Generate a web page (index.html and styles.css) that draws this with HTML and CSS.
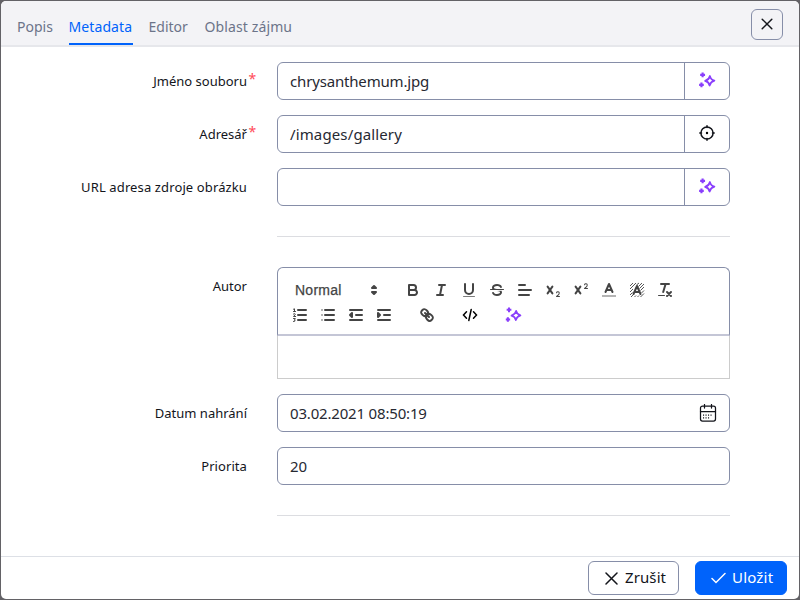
FILE: index.html
```html
<!DOCTYPE html>
<html lang="cs">
<head>
<meta charset="utf-8">
<title>Metadata</title>
<link rel="stylesheet" href="styles.css">
</head>
<body>
<svg class="defs" aria-hidden="true">
  <symbol id="sparkle" viewBox="0 0 16 16">
    <path d="M10.300 3.800Q10.900 7.100 14.500 8.100Q10.900 9.200 10 12.700Q9.300 9.300 5.800 8.400Q9.500 7.200 10.300 3.800Z" fill="none" stroke="currentColor" stroke-width="1.700" stroke-linejoin="round"/>
    <path d="M3.400 .4V5M1.100 2.700H5.700M2.300 9.900V14.300M.1 12.100H4.500" fill="none" stroke="currentColor" stroke-width="2"/>
  </symbol>
</svg>
<div class="modal">
  <header class="header">
    <nav class="tabs">
      <a class="tab t1">Popis</a>
      <a class="tab t2 active">Metadata</a>
      <a class="tab t3">Editor</a>
      <a class="tab t4">Oblast zájmu</a>
    </nav>
    <button class="close"><svg width="12" height="12" viewBox="0 0 12 12"><path class="line" d="M1.200 1.200 10.800 10.800M10.800 1.200 1.200 10.800"/></svg></button>
  </header>
  <main class="form">
    <div class="row">
      <label class="l1">Jméno souboru<sup>*</sup></label>
      <div class="field"><span class="value v1">chrysanthemum.jpg</span><span class="addon ai"><svg width="17" height="17"><use href="#sparkle"/></svg></span></div>
    </div>
    <div class="row">
      <label class="l2">Adresář<sup>*</sup></label>
      <div class="field"><span class="value v2">/images/gallery</span><span class="addon"><svg width="16" height="16" viewBox="0 0 16 16"><circle class="line" cx="8" cy="8" r="6.100"/><path class="line" d="M8 .8V2.500M8 13.500V15.200M.8 8H2.500M13.500 8H15.200"/><circle cx="8" cy="8" r="1.200"/></svg></span></div>
    </div>
    <div class="row">
      <label class="l3">URL adresa zdroje obrázku</label>
      <div class="field"><span class="value"></span><span class="addon ai"><svg width="17" height="17"><use href="#sparkle"/></svg></span></div>
    </div>
    <hr class="first">
    <div class="row">
      <label class="l4">Autor</label>
      <div class="editor">
        <div class="toolbar">
          <div class="tools">
            <span class="picker">Normal<svg viewBox="0 0 18 18"><polygon class="f s" points="7 11 9 13 11 11 7 11"/><polygon class="f s" points="7 7 9 5 11 7 7 7"/></svg></span>
            <svg viewBox="0 0 18 18"><path class="s" d="M5,4H9.500A2.500,2.500,0,0,1,12,6.500v0A2.500,2.500,0,0,1,9.500,9H5A0,0,0,0,1,5,9V4A0,0,0,0,1,5,4Z"/><path class="s" d="M5,9h5.500A2.500,2.500,0,0,1,13,11.500v0A2.500,2.500,0,0,1,10.500,14H5a0,0,0,0,1,0,0V9A0,0,0,0,1,5,9Z"/></svg>
            <svg viewBox="0 0 18 18"><path class="s" d="M7 4H13M5 14H11M8 14 10 4"/></svg>
            <svg viewBox="0 0 18 18"><path class="s" d="M5,3V9a4.012,4.012,0,0,0,4,4H9a4.012,4.012,0,0,0,4-4V3"/><rect class="f" height="1" rx=".5" width="12" x="3" y="15" opacity=".7"/></svg>
            <svg viewBox="0 0 18 18"><path class="s thin" d="M15.500 8.500H2.500"/><path class="f" d="M9.007,8C6.542,7.791,6,7.519,6,6.500,6,5.792,7.283,5,9,5c1.571,0,2.765.679,2.969,1.309a1,1,0,0,0,1.900-.617C13.356,4.106,11.354,3,9,3,6.200,3,4,4.538,4,6.500a3.200,3.200,0,0,0,.5,1.843Z"/><path class="f" d="M8.984,10C11.457,10.208,12,10.479,12,11.500c0,0.708-1.283,1.500-3,1.500-1.571,0-2.765-.679-2.969-1.309a1,1,0,1,0-1.900.617C4.644,13.894,6.646,15,9,15c2.800,0,5-1.538,5-3.500a3.200,3.200,0,0,0-.5-1.843Z"/></svg>
            <svg viewBox="0 0 18 18"><path class="s" d="M3 9H15M3 14H13M3 4H9"/></svg>
            <svg viewBox="0 0 18 18"><path class="f" d="M15.500,15H13.861a3.858,3.858,0,0,0,1.914-2.975,1.800,1.800,0,0,0-1.600-1.751A1.921,1.921,0,0,0,12.021,11.700a.5.500,0,1,0,.957.291h0a.914.914,0,0,1,1.053-.725.810.810,0,0,1,.744.762c0,1.076-1.169,1.870-1.936,2.400A1.456,1.456,0,0,0,12,15.500a.5.500,0,0,0,.5.500h3A.5.500,0,0,0,15.500,15Z"/><path class="s" d="M3.600 5.600 8.400 12.400M8.400 5.600 3.600 12.400"/></svg>
            <svg viewBox="0 0 18 18"><path class="f" d="M15.500,7H13.861a4.015,4.015,0,0,0,1.914-2.975,1.800,1.800,0,0,0-1.600-1.751A1.922,1.922,0,0,0,12.021,3.700a.5.500,0,1,0,.957.291.917.917,0,0,1,1.053-.725.810.810,0,0,1,.744.762c0,1.077-1.164,1.925-1.934,2.486A1.423,1.423,0,0,0,12,7.500a.5.500,0,0,0,.5.500h3A.5.500,0,0,0,15.500,7Z"/><path class="s" d="M3.600 5.600 8.400 12.400M8.400 5.600 3.600 12.400"/></svg>
            <svg viewBox="0 0 18 18"><path class="s bar" d="M2 15H16" opacity=".4"/><path class="s" d="M5.500 11 9 3 12.500 11M11.630 9H6.380"/></svg>
            <svg viewBox="0 0 18 18"><path class="hatch" d="M2 5 5 2M2 8 6.500 3.500M2 11 5 8M2 14 4.500 11.500M3 16 5 14M6.500 16 8 14.500M9.500 16 11 14.500M12.500 16 16 12.500M13.500 12 16 9.500M12.500 9.500 16 6M11.500 7.500 16 3M10.500 5.500 14 2M8.500 4 11 2M6 4 8 2"/><path class="s" d="M5.500 13 9 5 12.500 13M11.630 11H6.380"/></svg>
            <svg viewBox="0 0 18 18"><path class="s" d="M5 3H13M9.600 3 7.200 11M11 11 15 15M15 11 11 15"/><rect class="f" height="1" rx=".5" width="7" x="2" y="14"/></svg>
          </div>
          <div class="tools second">
            <svg viewBox="0 0 18 18"><path class="s" d="M7 4H15M7 9H15M7 14H15"/><path class="s thin" d="M2.500 5.500H4.500M3.500 5.500V2.800L2.500 3.200M2.500 8Q4.500 7 4.300 8.500L2.500 10.500H4.700M2.500 12.500H4.300L3.500 14Q5.500 15.200 2.500 15.500"/></svg>
            <svg viewBox="0 0 18 18"><path class="s" d="M6 4H15M6 9H15M6 14H15"/><path class="s dot" d="M3 4H3M3 9H3M3 14H3"/></svg>
            <svg viewBox="0 0 18 18"><path class="s" d="M3 14H15M3 4H15M9 9H15"/><path class="f s" d="M5 7V11L3 9Z"/></svg>
            <svg viewBox="0 0 18 18"><path class="s" d="M3 14H15M3 4H15M9 9H15"/><path class="f s" d="M3 7V11L5 9Z"/></svg>
            <svg class="gap" viewBox="0 0 18 18"><path class="s" d="M7 7 11 11M8.900 4.577a3.476,3.476,0,0,1,.36,4.679A3.476,3.476,0,0,1,4.577,8.900C3.185,7.500,2.035,6.400,4.217,4.217S7.500,3.185,8.900,4.577Z"/><path class="s" d="M13.423,9.100a3.476,3.476,0,0,0-4.679-.36,3.476,3.476,0,0,0,.36,4.679c1.392,1.392,2.500,2.542,4.679.36S14.815,10.500,13.423,9.100Z"/></svg>
            <svg class="gap code" viewBox="0 0 18 18"><path class="line" d="M5.500 5.800 2.500 9 5.500 12.200M12.500 5.800 15.500 9 12.500 12.200M10.200 3.500 7.800 14.500"/></svg>
            <svg class="gap sp" viewBox="0 0 18 18"><use href="#sparkle" x="1.500" y="1" width="16.500" height="16.500"/></svg>
          </div>
        </div>
        <div class="content"></div>
      </div>
    </div>
    <div class="row">
      <label class="l5">Datum nahrání</label>
      <div class="field"><span class="value v3">03.02.2021 08:50:19</span><svg class="cal" width="18" height="18" viewBox="0 0 18 18"><rect class="line" x="1.500" y="2" width="15" height="15" rx="2"/><path class="line" d="M1.500 7.500H16.500M5.500 .5V4M12.500 .5V4"/><path class="dots" d="M4 11.100H14M4 13.900H11.500"/></svg></div>
    </div>
    <div class="row">
      <label class="l6">Priorita</label>
      <div class="field"><span class="value v4">20</span></div>
    </div>
    <hr>
  </main>
  <footer class="footer">
    <button class="btn cancel"><svg width="13" height="13" viewBox="0 0 13 13"><path class="line" d="M1 1 12 12M12 1 1 12"/></svg><span>Zrušit</span></button>
    <button class="btn save"><svg width="15" height="12" viewBox="0 0 15 12"><path class="line" d="M1 6.500 5 10.500 14 1.500"/></svg><span>Uložit</span></button>
  </footer>
</div>
</body>
</html>
```
FILE: styles.css
```css
* { box-sizing: border-box; }
body { margin: 0; background: #636266; font-family: "Noto Sans", sans-serif; color: #13151b; }
.defs { position: absolute; width: 0; height: 0; }
.modal { width: 798px; height: 598px; margin: 1px; background: #fff; border-radius: 5px; overflow: hidden; display: flex; flex-direction: column; }
.header { height: 46px; flex: none; background: #f3f3f6; border-bottom: 2px solid #e6e7eb; display: flex; justify-content: space-between; align-items: flex-start; padding: 0 16px; }
.tabs { display: flex; gap: 16px; height: 44px; }
.tab { height: 44px; padding-top: 16px; line-height: 20px; font-size: 14px; color: #6c7489; white-space: nowrap; }
.t1 { width: 35.5px; } .t2 { width: 64px; } .t3 { width: 40px; } .t4 { letter-spacing: .12px; }
.active { color: #0063fb; border-bottom: 2px solid #0063fb; letter-spacing: .1px; }
button { font: inherit; padding: 0; }
.close { width: 32px; height: 31px; margin-top: 8px; border: 1px solid #868ea8; border-radius: 6px; background: transparent; color: #13151b; display: flex; align-items: center; justify-content: center; padding-bottom: 1px; }
.line { fill: none; stroke: currentColor; stroke-width: 1.5; stroke-linecap: round; }
.form { flex: 1; padding-top: 15px; }
.row { display: flex; margin-bottom: 15px; }
label { width: 246px; margin-right: 30px; padding-top: 9px; line-height: 20px; font-size: 13px; text-align: right; white-space: nowrap; position: relative; }
.l6 { letter-spacing: .08px; }
.l3 { letter-spacing: .12px; }
sup { position: absolute; left: 247.500px; top: 7px; font-size: 14px; line-height: 20px; color: #ff4b58; }
.field { width: 453px; height: 38px; border: 1px solid #868ea8; border-radius: 6px; display: flex; align-items: center; }
.value { flex: 1; padding-left: 12px; font-size: 15px; line-height: 22px; color: #272932; white-space: nowrap; }
.v1 { letter-spacing: -.17px; }
.v2 { letter-spacing: .13px; }
.v3 { letter-spacing: -.18px; }
.addon { width: 45px; height: 36px; border-left: 1px solid #868ea8; display: flex; align-items: center; justify-content: center; padding-bottom: 2px; }
.ai { padding: 0 0 1px 1px; }
.ai, .sp { color: #8a3ffc; }
hr { width: 453px; height: 1px; margin: 30px 0 0 276px; border: 0; background: #dcdde1; }
hr.first { margin-bottom: 30px; }
.editor { width: 453px; height: 112px; }
.toolbar { height: 69px; border: 1px solid #868ea8; border-bottom: 2px solid #c4c6d6; border-radius: 6px 6px 0 0; padding: 9px 8px 0; }
.tools { display: flex; height: 25px; align-items: center; }
.tools svg { width: 18px; height: 18px; margin: 0 5px; flex: none; overflow: visible; }
.picker { width: 98px; margin-right: 15px; padding-left: 9px; font: 500 14px/24px "Liberation Sans", sans-serif; letter-spacing: .25px; color: #444; -webkit-text-stroke: .25px #444; display: flex; align-items: center; justify-content: space-between; }
.tools .picker svg { margin: 0 1px 0 0; }
.tools .gap { margin-left: 20px; }
.s { fill: none; stroke: #444; stroke-width: 2; stroke-linecap: round; stroke-linejoin: round; }
.s.f { fill: #444; }
.thin { stroke-width: 1; }
.dot { stroke-width: 1.5; }
.bar { stroke-linecap: butt; }
.hatch { fill: none; stroke: #444; stroke-width: .9; }
.f { fill: #444; }
.code { color: #000; }
.content { height: 43px; border: 1px solid #ccc; border-top: 0; }
.cal { margin-right: 12px; }
.cal .line { stroke-width: 1.25; }
.dots { fill: none; stroke: currentColor; stroke-width: 1.1; stroke-dasharray: 1.1 1.4; }
.footer { height: 43px; flex: none; border-top: 1px solid #dde0e6; display: flex; justify-content: flex-end; padding: 4px 12px 0 0; gap: 16px; }
.btn { height: 34px; border: 1px solid #868ea8; border-radius: 6px; background: #fff; color: #13151b; font-size: 15px; display: flex; align-items: center; padding-left: 16px; white-space: nowrap; }
.btn span { padding-bottom: 2px; }
.cancel { width: 91px; } .cancel span { margin-left: 7px; letter-spacing: .1px; }
.save { width: 92px; background: #0063fb; border-color: #0063fb; color: #fff; padding-left: 15px; } .save span { margin-left: 6px; letter-spacing: .2px; }
```
